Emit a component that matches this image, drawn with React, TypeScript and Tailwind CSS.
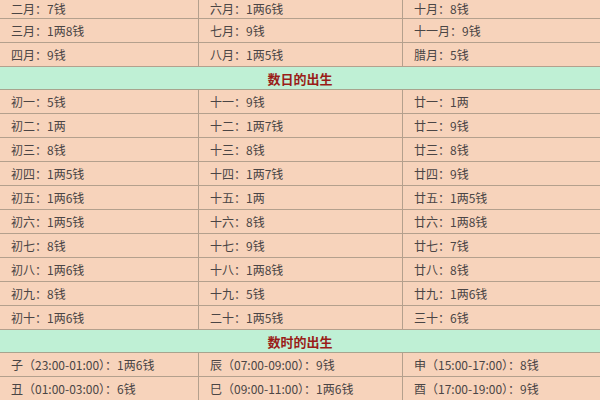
import React from "react"

type Row = string[] | { header: string }

const rows: Row[] = [
  ["二月：7钱", "六月：1两6钱", "十月：8钱"],
  ["三月：1两8钱", "七月：9钱", "十一月：9钱"],
  ["四月：9钱", "八月：1两5钱", "腊月：5钱"],
  { header: "数日的出生" },
  ["初一：5钱", "十一：9钱", "廿一：1两"],
  ["初二：1两", "十二：1两7钱", "廿二：9钱"],
  ["初三：8钱", "十三：8钱", "廿三：8钱"],
  ["初四：1两5钱", "十四：1两7钱", "廿四：9钱"],
  ["初五：1两6钱", "十五：1两", "廿五：1两5钱"],
  ["初六：1两5钱", "十六：8钱", "廿六：1两8钱"],
  ["初七：8钱", "十七：9钱", "廿七：7钱"],
  ["初八：1两6钱", "十八：1两8钱", "廿八：8钱"],
  ["初九：8钱", "十九：5钱", "廿九：1两6钱"],
  ["初十：1两6钱", "二十：1两5钱", "三十：6钱"],
  { header: "数时的出生" },
  ["子（23:00-01:00）：1两6钱", "辰（07:00-09:00）：9钱", "申（15:00-17:00）：8钱"],
  ["丑（01:00-03:00）：6钱", "巳（09:00-11:00）：1两6钱", "酉（17:00-19:00）：9钱"],
]

function Cell({ text, last }: { text: string; last: boolean }) {
  return (
    <div className={last ? "flex items-center pl-[11px] whitespace-nowrap leading-none" : "flex items-center pl-[11px] whitespace-nowrap leading-none border-r border-[#b4a08d]"}>
      {text}
    </div>
  )
}

export default function App() {
  return (
    <div className="w-[600px] h-[400px] overflow-hidden bg-[#f7d3bb] text-[12px] text-[#4a4545] font-['Noto_Sans_CJK_SC',sans-serif]">
      {rows.map((row, i) =>
        Array.isArray(row) ? (
          <div
            key={i}
            className={i === 0
              ? "grid grid-cols-[199px_204px_1fr] h-[19px] border-b border-[#b4a08d]"
              : "grid grid-cols-[199px_204px_1fr] h-[24px] border-b border-[#b4a08d]"}
          >
            {row.map((cell, j) => (
              <Cell key={j} text={cell} last={j === 2} />
            ))}
          </div>
        ) : (
          <div
            key={i}
            className="h-[23px] flex items-center justify-center bg-[#bff0d5] border-b border-[#a8a48e] font-bold text-[13px] leading-none text-[#9a1d18]"
          >
            {row.header}
          </div>
        )
      )}
    </div>
  )
}
